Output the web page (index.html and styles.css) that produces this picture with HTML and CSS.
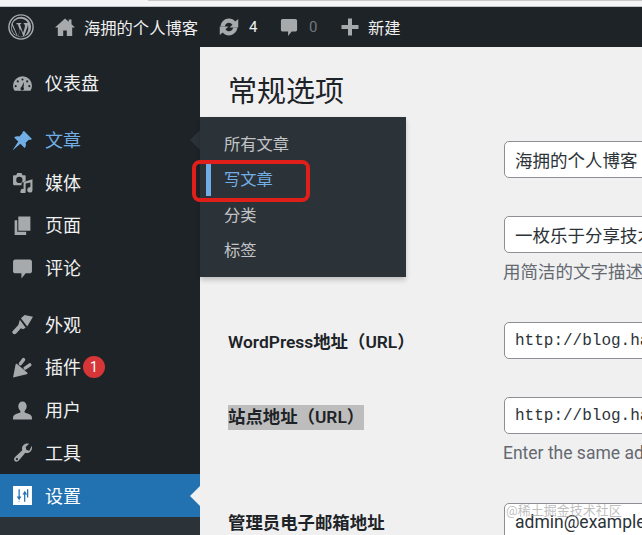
FILE: index.html
```html
<!DOCTYPE html>
<html lang="zh-CN">
<head>
<meta charset="utf-8">
<title>常规选项</title>
<link rel="stylesheet" href="styles.css">
</head>
<body>
<div class="browser-strip"><div class="strip-thumb"></div></div>
<header class="adminbar">
  <svg class="ab-icon ab-wp" viewBox="0 0 20 20"><circle cx="10" cy="10" r="9.3" fill="none" stroke="currentColor" stroke-width="1.1"/><circle cx="10" cy="10" r="7.8" fill="currentColor"/><path d="M3.6 7.6 7.6 17.3l1.6-4.6-1.7-4.8-1-.1V7l3.6-.1v.8l-.9.1 2.4 6.9 1.3-4.3c.5-1.7-.1-2.6-.8-2.7v-.8h3.2c-1-1.9-2.8-3.2-5-3.3C6.6 3.600 4.400 5.200 3.600 7.600Z M12.300 17.300l2.500-7c.4-1 .4-1.700.3-2.400 1.300 3.300.1 7.400-2.800 9.400Z M2.900 8.500c-.5 3.200 1 6.500 3.900 8.200Z M9.800 11.500 7.900 17.200c1.300.4 2.600.3 3.800-.1Z" fill="#1d2327"/></svg>
  <svg class="ab-icon ab-home" viewBox="0 0 20 20"><path fill="currentColor" d="M10 1.500 0 10.500h2.800V19h5.400v-5.500h3.600V19h5.400v-8.500H20L16.500 7.300V2.500h-2.800v2.300Z"/></svg>
  <span class="ab-text ab-site">海拥的个人博客</span>
  <svg class="ab-icon ab-sync" viewBox="0 0 20 20"><path fill="currentColor" d="M10 3c2.100 0 4 1 5.200 2.500l2.500-2.200v7.200h-7.300l2.500-2.400C12.100 7 11.100 6.400 10 6.400c-1.700 0-3.100 1.200-3.400 2.900H3C3.400 5.800 6.400 3 10 3ZM17 10.700C16.600 14.200 13.600 17 10 17c-2.100 0-4-1-5.200-2.500l-2.500 2.200V9.500h7.300l-2.500 2.400c.8 1.100 1.800 1.700 2.900 1.700 1.700 0 3.100-1.200 3.400-2.900Z"/></svg>
  <span class="ab-count">4</span>
  <svg class="ab-icon ab-comment" viewBox="0 0 20 20"><path fill="currentColor" d="M3 1h14c1.100 0 2 .9 2 2v10c0 1.100-.9 2-2 2h-4l-4 5v-5H3c-1.100 0-2-.9-2-2V3c0-1.100.9-2 2-2Z"/></svg>
  <span class="ab-count ab-zero">0</span>
  <svg class="ab-icon ab-plus" viewBox="0 0 20 20"><path fill="currentColor" d="M8 1.500h4V8h6.500v4H12v6.500H8V12H1.500V8H8Z"/></svg>
  <span class="ab-text ab-new">新建</span>
</header>
<div class="layout">
  <nav class="sidebar">
    <a class="nav-item nav-first"><svg class="nav-icon" viewBox="0 0 20 20"><path fill="currentColor" fill-rule="evenodd" d="M10 3a9 9 0 0 1 9 9c0 2-.6 3.700-1.500 5H2.500C1.600 15.700 1 14 1 12a9 9 0 0 1 9-9ZM10 5.200a1 1 0 1 0 0 2 1 1 0 0 0 0-2ZM5.500 7a1 1 0 1 0 0 2 1 1 0 0 0 0-2ZM14.500 7a1 1 0 1 0 0 2 1 1 0 0 0 0-2ZM3.500 11.500a1 1 0 1 0 0 2 1 1 0 0 0 0-2ZM16.500 11.500a1 1 0 1 0 0 2 1 1 0 0 0 0-2ZM11.500 8.500 9 13.300a1.700 1.700 0 1 0 2 .4Z"/></svg><span class="nav-label">仪表盘</span></a>
    <a class="nav-item nav-post nav-sep"><svg class="nav-icon" viewBox="0 0 20 20"><path fill="currentColor" d="M11.500 1 19 8.500c-1 .9-2.200 1-3 .7l-3 3c.6 2 .2 3.700-1 5l-4-4L1 19l-.2-.2L6 11 2 7.200c1.300-1.200 3-1.600 5-1l3-3c-.3-.8-.2-1.600 1.500-2.200Z"/></svg><span class="nav-label">文章</span></a>
    <a class="nav-item"><svg class="nav-icon" viewBox="0 0 20 20"><path fill="currentColor" fill-rule="evenodd" d="M5 1h4l1 2h2c.6 0 1 .4 1 1v5.500H11a2 2 0 0 0-2 2v1H2c-.6 0-1-.4-1-1V4c0-.6.400-1 1-1h2ZM7 4.500a3 3 0 1 0 0 6 3 3 0 0 0 0-6ZM19.500 7v10a2.500 2.500 0 1 1-2-2.400V10l-4.500 1v7.500a2.500 2.500 0 1 1-2-2.400V9.500Z"/></svg><span class="nav-label">媒体</span></a>
    <a class="nav-item"><svg class="nav-icon" viewBox="0 0 20 20"><path fill="currentColor" d="M6 1.500h11.500v13.500H6ZM2.500 5H5v11h8.500v3h-11Z"/></svg><span class="nav-label">页面</span></a>
    <a class="nav-item"><svg class="nav-icon" viewBox="0 0 20 20"><path fill="currentColor" d="M3 1.500h14c1 0 2 1 2 2v9c0 1-1 2-2 2h-4l-4 5v-5H3c-1 0-2-1-2-2v-9c0-1 1-2 2-2Z"/></svg><span class="nav-label">评论</span></a>
    <a class="nav-item nav-sep"><svg class="nav-icon" viewBox="0 0 20 20"><path fill="currentColor" d="M8.500 4 12 1l8 1.500L14.500 12ZM7.500 5.500 13 13l-2.500 1.500-2-1L4 18.500C2.500 20-.5 19 .5 16.500L6 10.500Z"/></svg><span class="nav-label">外观</span></a>
    <a class="nav-item"><svg class="nav-icon" viewBox="0 0 20 20"><path fill="currentColor" d="M1 19.500 3.300 7.500c.2-1 1-1.300 1.800-.7l9.300 7.900c.7.600.5 1.500-.4 1.700Z"/><path d="M8 6.500 11 2.500M12.500 10.500 17 7.500" fill="none" stroke="currentColor" stroke-width="3.200" stroke-linecap="round"/></svg><span class="nav-label">插件</span><span class="badge">1</span></a>
    <a class="nav-item"><svg class="nav-icon" viewBox="0 0 20 20"><path fill="currentColor" d="M10 1.500c2.500 0 4 2 4 4.500 0 2-1 3.500-2 4.500v1.500c2 .8 6.500 1.500 7 4.500v2H1v-2c.5-3 5-3.700 7-4.500v-1.500c-1-1-2-2.500-2-4.500 0-2.500 1.500-4.500 4-4.500Z"/></svg><span class="nav-label">用户</span></a>
    <a class="nav-item"><svg class="nav-icon" viewBox="0 0 20 20"><path fill="currentColor" fill-rule="evenodd" d="M18.800 3.500c.6 2.300.1 4.400-1.400 5.700-1.400 1.300-3 1.500-4.700 1L6.500 17.700c-1.200 1.300-3 1.400-3.900.3-1-1-.8-2.500.3-3.700L9.800 7.800c-.5-1.700-.3-3.500 1-4.800C12 1.600 14.300 1 16.300 1.600L13 4.800l.8 2.800 2.700.8ZM4.700 15.200a1.100 1.100 0 1 0 0 2.200 1.100 1.100 0 0 0 0-2.200Z"/></svg><span class="nav-label">工具</span></a>
    <a class="nav-item nav-current"><svg class="nav-icon" viewBox="0 0 20 20"><path fill="currentColor" fill-rule="evenodd" d="M1 1h18v18H1ZM6.200 4v7H4.500l2.300 3.500L9 11H7.400V4ZM12.700 16V9h1.700l-2.200-3.500L10 9h1.500v7ZM15.500 4h-1.200v8h1.200ZM6.200 15.500V16h1.200v-.5Z"/></svg><span class="nav-label">设置</span></a>
    <div class="sidebar-sub"></div>
  </nav>
  <main class="content">
    <h1 class="page-title">常规选项</h1>
    <form class="settings">
      <div class="row"><label class="row-label"></label><div><input class="field" type="text" value="海拥的个人博客"></div></div>
      <div class="row"><label class="row-label"></label><div><input class="field" type="text" value="一枚乐于分享技术与快乐的博主"><p class="hint">用简洁的文字描述此站点</p></div></div>
      <div class="row"><label class="row-label">WordPress地址（URL）</label><div><input class="field mono" type="text" value="http://blog.haiyong.site"></div></div>
      <div class="row"><label class="row-label"><span class="selected">站点地址（URL）</span></label><div><input class="field mono" type="text" value="http://blog.haiyong.site"><p class="hint">Enter the same address here unless you want</p></div></div>
      <div class="row"><label class="row-label">管理员电子邮箱地址</label><div><input class="field" type="text" value="admin@example.com"></div></div>
    </form>
  </main>
</div>
<div class="flyout">
  <a class="fly-item">所有文章</a>
  <a class="fly-item fly-current">写文章</a>
  <a class="fly-item">分类</a>
  <a class="fly-item">标签</a>
</div>
<div class="annotation"></div>
<div class="watermark">@稀土掘金技术社区</div>
</body>
</html>
```
FILE: styles.css
```css
* { box-sizing: border-box; }
html, body { margin: 0; height: 535px; overflow: hidden; }
body {
  position: relative;
  width: 642px;
  background: #f0f0f1;
  color: #1d2327;
  font-family: Roboto, "Noto Sans CJK SC", sans-serif;
  display: flex;
  flex-direction: column;
}
.browser-strip { height: 7px; background: #f4f4f4; border-bottom: 1px solid #c4c4c4; flex: none; }
.strip-thumb { width: 494px; height: 1px; margin-left: 148px; background: #c8c8c8; }
.adminbar {
  flex: none;
  height: 40px;
  background: #1d2327;
  color: #f0f0f1;
  display: flex;
  align-items: center;
  font-size: 16.300px;
}
.ab-icon { color: #a7aaad; flex: none; }
.ab-wp { width: 26px; height: 26px; margin-left: 8px; }
.ab-home { width: 20px; height: 20px; margin-left: 21px; }
.ab-text { margin-left: 9px; white-space: nowrap; }
.ab-sync { width: 24px; height: 24px; margin-left: 19px; }
.ab-count { margin-left: 8px; font-size: 15px; width: 9px; }
.ab-comment { width: 18px; height: 24px; margin-left: 22px; }
.ab-zero { margin-left: 11px; color: #72777c; }
.ab-plus { width: 20px; height: 20px; margin-left: 22px; }
.ab-new { margin-left: 8px; }
.layout { flex: 1; display: flex; min-height: 0; }
.sidebar { width: 200px; flex: none; background: #1d2327; display: flex; flex-direction: column; padding-top: 15px; }
.nav-item {
  height: 42.700px;
  flex: none;
  display: flex;
  align-items: center;
  padding-left: 12px;
  color: #f0f0f1;
  font-size: 18px;
}
.nav-label { margin-bottom: 2px; }
.nav-icon { width: 21px; height: 21px; color: #a7aaad; margin-right: 12px; flex: none; }
.nav-sep { margin-top: 14px; }
.nav-post { color: #72aee6; position: relative; }
.nav-post .nav-icon { color: #72aee6; }
.nav-post::after {
  content: "";
  position: absolute;
  right: 0;
  top: 50%;
  margin-top: -10px;
  border: 10px solid transparent;
  border-right-color: #2c3338;
  border-left: 0;
}
.nav-current { background: #2271b1; color: #fff; position: relative; }
.nav-current .nav-icon { color: #fff; }
.nav-current::after {
  content: "";
  position: absolute;
  right: 0;
  top: 50%;
  margin-top: -10px;
  border: 10px solid transparent;
  border-right-color: #f0f0f1;
  border-left: 0;
}
.sidebar-sub { flex: 1; background: #2c3338; }
.badge {
  width: 22px;
  height: 22px;
  border-radius: 50%;
  background: #d63638;
  color: #fff;
  font-size: 14px;
  display: flex;
  align-items: center;
  justify-content: center;
  margin-left: 2px;
}
.content { flex: 1; min-width: 0; padding-left: 28px; overflow: hidden; }
.page-title { margin: 27px 0 0; height: 67px; font-size: 29px; font-weight: 400; line-height: 36px; }
.row { display: grid; grid-template-columns: 276px 500px; padding-bottom: 38px; }
.row-label { font-size: 17.400px; font-weight: 600; height: 37px; line-height: 40px; white-space: nowrap; }
.selected { display: inline-block; background: #bdbdbd; line-height: 25px; }
.field {
  display: block;
  width: 420px;
  height: 37px;
  border: 1px solid #8c8f94;
  border-radius: 5px;
  background: #fff;
  color: #2c3338;
  padding: 0 10px;
  font-family: Roboto, "Noto Sans CJK SC", sans-serif;
  font-size: 17.500px;
}
.mono { font-family: "Liberation Mono", monospace; font-size: 16px; padding-top: 1px; }
.hint { margin: 7px 0 0 -1px; height: 24px; line-height: 25px; color: #646970; font-size: 17.500px; white-space: nowrap; }
.flyout {
  position: absolute;
  left: 200px;
  top: 117px;
  width: 206px;
  height: 160px;
  padding-top: 10px;
  background: #2c3338;
  box-shadow: 0 3px 5px rgba(0,0,0,.2);
}
.fly-item { display: block; height: 35.300px; line-height: 35px; padding-left: 24px; color: #c3c4c7; font-size: 16.300px; position: relative; }
.fly-current { color: #72aee6; }
.fly-current::before { content: ""; position: absolute; left: 6px; top: 0; width: 5px; height: 34px; background: #72aee6; }
.annotation { position: absolute; left: 192px; top: 160px; width: 118px; height: 42px; border: 4px solid #e01f1a; border-radius: 8px; }
.watermark { position: absolute; left: 506px; top: 503px; color: rgba(170,170,170,.75); font-size: 13px; line-height: 16px; white-space: nowrap; }
```
